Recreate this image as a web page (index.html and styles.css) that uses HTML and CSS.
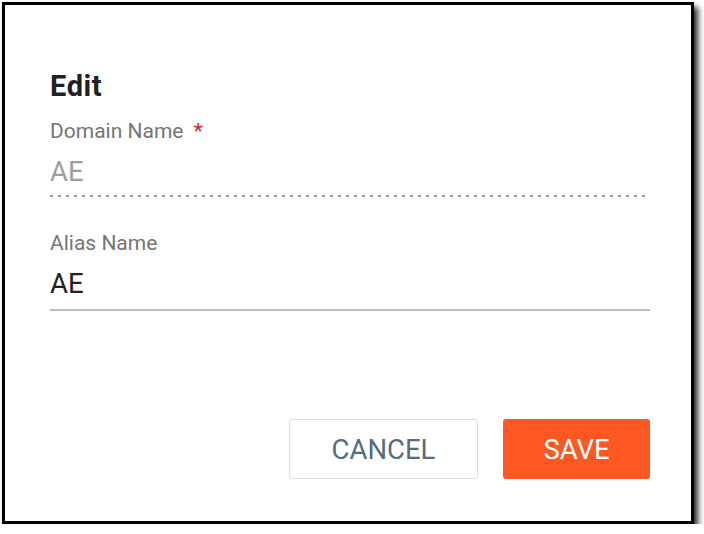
FILE: index.html
```html
<!DOCTYPE html>
<html lang="en">
<head>
<meta charset="utf-8">
<title>Edit</title>
<link rel="stylesheet" href="styles.css">
</head>
<body>
<div class="dialog">
  <h1 class="title">Edit</h1>
  <div class="field field-disabled">
    <div class="label">Domain Name<span class="req">*</span></div>
    <div class="value">AE</div>
  </div>
  <div class="field field-active">
    <div class="label">Alias Name</div>
    <div class="value">AE</div>
  </div>
  <div class="actions">
    <button class="btn btn-cancel" type="button">CANCEL</button>
    <button class="btn btn-save" type="button">SAVE</button>
  </div>
</div>
</body>
</html>
```
FILE: styles.css
```css
html, body {
  margin: 0;
  padding: 0;
  background: #ffffff;
}
body {
  font-family: Roboto, "Liberation Sans", sans-serif;
  padding: 2px 0 0 2px;
}
.dialog {
  box-sizing: border-box;
  width: 692px;
  height: 522px;
  border: 3px solid #000;
  background: #fff;
  box-shadow: 4px 5px 6px rgba(0, 0, 0, 0.85);
  padding: 65px 41px 42px 45px;
  display: flex;
  flex-direction: column;
}
.title {
  margin: 0;
  font-size: 29px;
  line-height: 32px;
  font-weight: 700;
  letter-spacing: 0.6px;
  color: #212121;
}
.field {
  display: flex;
  flex-direction: column;
}
.label {
  font-size: 21px;
  line-height: 24px;
  color: #757575;
}
.field-disabled {
  margin-top: 17px;
}
.field-active {
  margin-top: 34px;
}
.req {
  color: #d32f2f;
  margin-left: 10px;
  font-weight: 500;
}
.value {
  margin-top: 13px;
  font-size: 27.5px;
  line-height: 32px;
}
.field-disabled .value {
  color: #9e9e9e;
  background-image: linear-gradient(to right, #a0a0a0 0, #a0a0a0 33%, transparent 33%);
  background-size: 8px 2px;
  background-repeat: repeat-x;
  background-position: left bottom;
  padding-bottom: 9px;
  margin-right: 5px;
}
.field-active .value {
  color: #212121;
  padding-bottom: 9px;
  border-bottom: 2px solid #bdbdbd;
}
.actions {
  margin-top: auto;
  display: flex;
  justify-content: flex-end;
  gap: 25px;
}
.btn {
  box-sizing: border-box;
  height: 60px;
  font-family: Roboto, "Liberation Sans", sans-serif;
  font-size: 27.5px;
  font-weight: 400;
  border-radius: 3px;
  padding: 0;
  cursor: pointer;
}
.btn-cancel {
  width: 189px;
  background: #fff;
  border: 1.5px solid #dcdcdc;
  color: #546e7a;
}
.btn-save {
  width: 147px;
  background: #ff5722;
  border: none;
  color: #fff;
}
```
